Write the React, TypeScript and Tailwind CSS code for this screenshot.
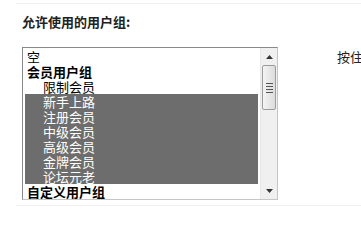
import React from 'react';

const groups: { label: string; bold?: boolean; indent?: boolean; selected?: boolean }[] = [
  { label: '空' },
  { label: '会员用户组', bold: true },
  { label: '限制会员', indent: true },
  { label: '新手上路', indent: true, selected: true },
  { label: '注册会员', indent: true, selected: true },
  { label: '中级会员', indent: true, selected: true },
  { label: '高级会员', indent: true, selected: true },
  { label: '金牌会员', indent: true, selected: true },
  { label: '论坛元老', indent: true, selected: true },
  { label: '自定义用户组', bold: true },
];

const ScrollBar = () => (
  <div className="w-[17px] flex flex-col bg-[#f0f0f0] border-l border-[#e8e8e8]">
    <div className="h-[17px] flex items-center justify-center">
      <svg width="7" height="4" viewBox="0 0 7 4"><path d="M3.5 0 L7 4 L0 4 Z" fill="#333" /></svg>
    </div>
    <div className="h-[45px] mx-[1px] rounded-[2px] border border-[#9c9c9c] bg-gradient-to-r from-[#f4f4f4] to-[#dcdcdc] flex flex-col items-center justify-center gap-[2px]">
      <div className="w-[7px] h-px bg-[#555]" />
      <div className="w-[7px] h-px bg-[#555]" />
      <div className="w-[7px] h-px bg-[#555]" />
      <div className="w-[7px] h-px bg-[#555]" />
    </div>
    <div className="flex-1" />
    <div className="h-[17px] flex items-center justify-center">
      <svg width="7" height="4" viewBox="0 0 7 4"><path d="M0 0 L7 0 L3.5 4 Z" fill="#333" /></svg>
    </div>
  </div>
);

export default function App() {
  return (
    <div
      className="w-[361px] h-[214px] bg-white pt-[3px] pl-[16px] overflow-hidden"
      style={{ fontFamily: '"Noto Sans CJK SC", "Liberation Sans", sans-serif' }}
    >
      <div className="h-[203px] border-t border-b border-[#f0f0f0] flex items-start">
        <div className="pl-[6px]">
          <h3 className="pt-[10px] h-[43px] text-[13px] leading-[16px] font-bold text-[#222]">允许使用的用户组:</h3>
          <div className="w-[256px] h-[153px] flex border border-[#888] border-b-[#c6c6c6] border-r-[#c6c6c6] bg-white">
            <ul className="flex-1 pt-[1px] px-[2px] text-[13px] leading-[15px] text-black">
              {groups.map((g) => (
                <li
                  key={g.label}
                  className={`h-[15px] whitespace-nowrap ${g.indent ? 'pl-[18px]' : 'pl-[2px]'} ${g.bold ? 'font-bold' : ''} ${g.selected ? 'bg-[#6d6d6d] text-white' : ''}`}
                >
                  {g.label}
                </li>
              ))}
            </ul>
            <ScrollBar />
          </div>
        </div>
        <p className="ml-[59px] mt-[45px] whitespace-nowrap text-[13px] leading-[16px] text-[#222]">按住 CTRL 可多选</p>
      </div>
    </div>
  );
}
